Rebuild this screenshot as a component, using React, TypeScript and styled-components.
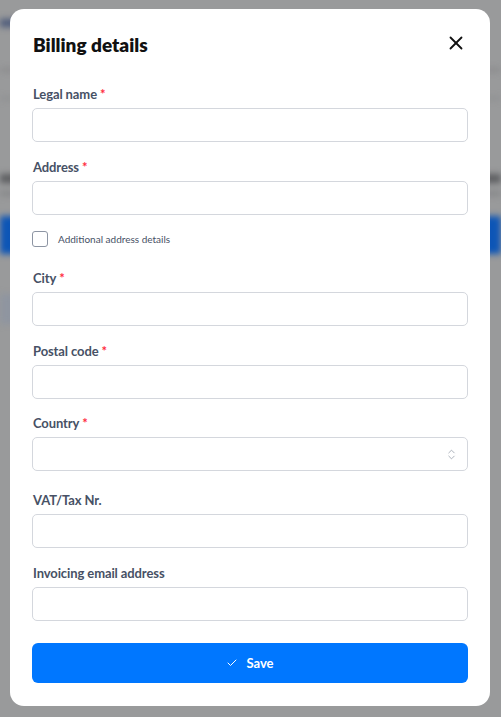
import React from "react";
import styled, { createGlobalStyle } from "styled-components";
import { X, ChevronsUpDown, Check } from "lucide-react";

const GlobalStyle = createGlobalStyle`
  html, body {
    margin: 0;
    padding: 0;
    height: 100%;
  }
  body {
    font-family: Lato, "Noto Sans", sans-serif;
    background: #999a9b;
    overflow: hidden;
  }
`;

const Backdrop = styled.div`
  height: 717px;
  display: flex;
  flex-direction: column;
  filter: blur(3px);
`;

const Smudge = styled.div<{ $h: number; $mt: number; $color: string; $w?: string }>`
  height: ${(p) => p.$h}px;
  margin-top: ${(p) => p.$mt}px;
  width: ${(p) => p.$w || "100%"};
  background: ${(p) => p.$color};
`;

const Overlay = styled.div`
  position: fixed;
  inset: 0;
  display: flex;
  align-items: flex-start;
  padding: 9px 11px 0 10px;
`;

const Modal = styled.div`
  width: 480px;
  box-sizing: border-box;
  background: #fff;
  border-radius: 14px;
  padding: 22px 22px 23px;
  display: flex;
  flex-direction: column;
`;

const Header = styled.div`
  height: 28px;
  display: flex;
  align-items: center;
  justify-content: space-between;
  margin-bottom: 27px;
`;

const Title = styled.h2`
  margin: 0;
  font-family: Lato, sans-serif;
  font-weight: 800;
  font-size: 19px;
  line-height: 28px;
  color: #111;
  padding-left: 1px;
`;

const CloseButton = styled.button`
  border: 0;
  background: none;
  padding: 0;
  width: 24px;
  height: 24px;
  display: flex;
  align-items: center;
  justify-content: center;
  color: #111;
  margin-top: -4px;
  cursor: pointer;
`;

const Field = styled.div<{ $mb?: number }>`
  display: flex;
  flex-direction: column;
  margin-bottom: ${(p) => p.$mb ?? 17}px;
`;

const Label = styled.label`
  font-family: Lato, sans-serif;
  font-weight: 700;
  font-size: 13px;
  line-height: 16px;
  color: #475165;
  margin-bottom: 6px;
  padding-left: 1px;
  letter-spacing: -0.1px;
`;

const Required = styled.span`
  color: #ff2b3d;
  margin-left: 3px;
`;

const Input = styled.input`
  box-sizing: border-box;
  height: 34px;
  width: 100%;
  border: 1px solid #d4d7dd;
  border-radius: 5px;
  background: #fff;
  outline: none;
  font-family: Lato, sans-serif;
  font-size: 13px;
  padding: 0 10px;
`;

const SelectBox = styled.div`
  box-sizing: border-box;
  height: 34px;
  border: 1px solid #d4d7dd;
  border-radius: 5px;
  background: #fff;
  display: flex;
  align-items: center;
  justify-content: flex-end;
  padding-right: 9px;
  color: #9aa1ad;
`;

const CheckRow = styled.label`
  display: flex;
  align-items: center;
  gap: 10px;
  height: 16px;
  margin-bottom: 23px;
`;

const CheckBox = styled.span`
  box-sizing: border-box;
  width: 16px;
  height: 16px;
  border: 1px solid #8d95a3;
  border-radius: 3px;
  background: #fff;
`;

const CheckText = styled.span`
  font-family: Lato, sans-serif;
  font-size: 10px;
  color: #475165;
`;

const SaveButton = styled.button`
  height: 40px;
  border: 0;
  border-radius: 6px;
  background: #0077ff;
  color: #fff;
  display: flex;
  align-items: center;
  justify-content: center;
  gap: 8px;
  font-family: Lato, sans-serif;
  font-weight: 700;
  font-size: 13px;
  margin-top: 5px;
  cursor: pointer;
`;

const fields: { label: string; required: boolean; mb?: number }[] = [
  { label: "City", required: true },
  { label: "Postal code", required: true, mb: 16 },
];

export default function App() {
  return (
    <>
      <GlobalStyle />
      <Backdrop>
        <Smudge $h={8} $mt={19} $color="#4c5a7a" $w="40px" />
        <Smudge $h={4} $mt={41} $color="#8a8a8c" />
        <Smudge $h={3} $mt={25} $color="#8d8e90" />
        <Smudge $h={9} $mt={74} $color="#5c5d60" />
        <Smudge $h={5} $mt={8} $color="#858688" />
        <Smudge $h={38} $mt={20} $color="#0d55b6" />
        <Smudge $h={30} $mt={40} $color="#8f95a0" $w="20px" />
      </Backdrop>
      <Overlay>
        <Modal>
          <Header>
            <Title>Billing details</Title>
            <CloseButton aria-label="Close">
              <X size={22} strokeWidth={2} />
            </CloseButton>
          </Header>

          <Field>
            <Label>
              Legal name<Required>*</Required>
            </Label>
            <Input />
          </Field>

          <Field $mb={16}>
            <Label>
              Address<Required>*</Required>
            </Label>
            <Input />
          </Field>

          <CheckRow>
            <CheckBox />
            <CheckText>Additional address details</CheckText>
          </CheckRow>

          {fields.map((f) => (
            <Field key={f.label} $mb={f.mb}>
              <Label>
                {f.label}
                {f.required && <Required>*</Required>}
              </Label>
              <Input />
            </Field>
          ))}

          <Field $mb={21}>
            <Label>
              Country<Required>*</Required>
            </Label>
            <SelectBox>
              <ChevronsUpDown size={13} strokeWidth={1.5} />
            </SelectBox>
          </Field>

          <Field>
            <Label>VAT/Tax Nr.</Label>
            <Input />
          </Field>

          <Field $mb={17}>
            <Label>Invoicing email address</Label>
            <Input />
          </Field>

          <SaveButton>
            <Check size={12} strokeWidth={2} />
            Save
          </SaveButton>
        </Modal>
      </Overlay>
    </>
  );
}
